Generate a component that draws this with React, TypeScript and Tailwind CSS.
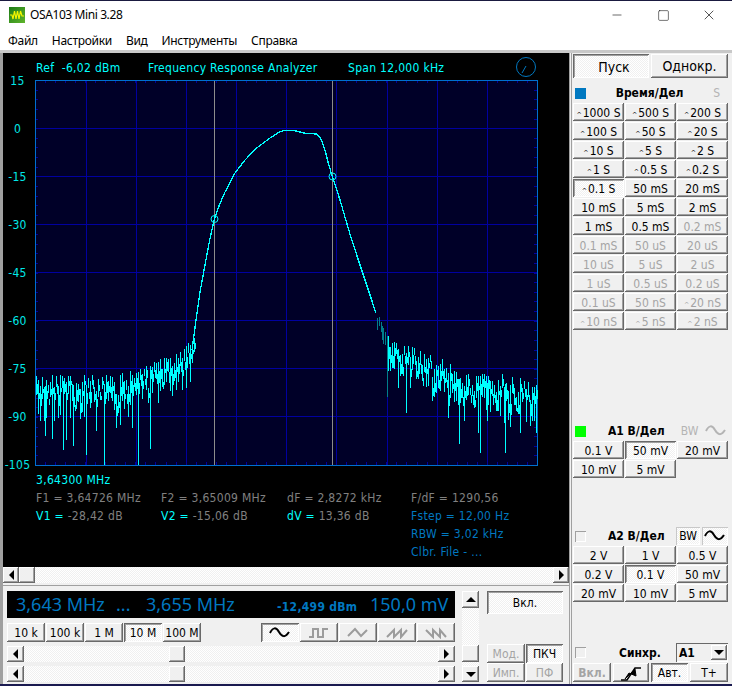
import React from "react"
import { Minus, Square, X } from "lucide-react"

const raised = "bg-[#f0f0f0] shadow-[inset_-1px_-1px_0_#696969,inset_1px_1px_0_#ffffff,inset_-2px_-2px_0_#a0a0a0]"
const sunken = "bg-[repeating-conic-gradient(#f0f0f0_0_25%,#ffffff_0_50%)] bg-[length:2px_2px] shadow-[inset_1px_1px_0_#696969,inset_-1px_-1px_0_#ffffff,inset_2px_2px_0_#a0a0a0]"
const softDown = "bg-[repeating-conic-gradient(#f0f0f0_0_25%,#ffffff_0_50%)] bg-[length:2px_2px] shadow-[inset_1px_1px_0_#c8c8c8,inset_-1px_-1px_0_#ffffff]"
const dither = "bg-[repeating-conic-gradient(#f0f0f0_0_25%,#ffffff_0_50%)] bg-[length:2px_2px]"

function Btn({ label, down, off, mark, className }: { label?: React.ReactNode; down?: boolean; off?: boolean; mark?: boolean; className?: string }) {
    return (
        <div className={`flex items-center justify-center whitespace-nowrap pt-px text-[12px] ${down ? sunken : raised} ${off ? "text-[#a4a4a4]" : "text-black"} ${className ?? ""}`}>
            {mark && <span className="mr-px translate-y-[3px] text-[7px]">^</span>}
            {label}
        </div>
    )
}

const timeButtons: [string, boolean, boolean][] = [
    ["1000 S", true, false], ["500 S", true, false], ["200 S", true, false],
    ["100 S", true, false], ["50 S", true, false], ["20 S", true, false],
    ["10 S", true, false], ["5 S", true, false], ["2 S", true, false],
    ["1 S", true, false], ["0.5 S", true, false], ["0.2 S", true, false],
    ["0.1 S", true, false], ["50 mS", false, false], ["20 mS", false, false],
    ["10 mS", false, false], ["5 mS", false, false], ["2 mS", false, false],
    ["1 mS", false, false], ["0.5 mS", false, false], ["0.2 mS", false, true],
    ["0.1 mS", false, true], ["50 uS", false, true], ["20 uS", false, true],
    ["10 uS", false, true], ["5 uS", false, true], ["2 uS", false, true],
    ["1 uS", false, true], ["0.5 uS", false, true], ["0.2 uS", false, true],
    ["0.1 uS", false, true], ["50 nS", false, true], ["20 nS", true, true],
    ["10 nS", true, true], ["5 nS", true, true], ["2 nS", true, true],
]

function rng(seed: number) {
    let s = seed
    return () => {
        s = (s * 16807) % 2147483647
        return s / 2147483647
    }
}

function lerp(table: number[][], x: number) {
    for (let i = 1; i < table.length; i++) {
        if (x <= table[i][0]) {
            const [x0, y0] = table[i - 1]
            const [x1, y1] = table[i]
            return y0 + ((y1 - y0) * (x - x0)) / (x1 - x0)
        }
    }
    return table[table.length - 1][1]
}

const leftTop = [[36, 376], [60, 375], [90, 375], [120, 373], [140, 368], [150, 362], [170, 356], [185, 346], [194, 336]]
const rightTop = [[388, 336], [400, 342], [420, 350], [440, 358], [460, 370], [480, 374], [500, 372], [520, 378], [537, 384]]

// side lobes: columns two pixels apart, so the plot shows through like in the capture
function noise(from: number, to: number, table: number[][], seed: number, depth: number, spikes: number[][]) {
    const r = rng(seed)
    let d = ""
    for (let x = from; x <= to; x += 2) {
        const top = lerp(table, x)
        const a = top + r() * r() * 26
        const b = a + 6 + r() * depth
        const c = a + 4 + r() * 10
        d += `M${x + 0.5} ${a.toFixed(0)}V${b.toFixed(0)}`
        d += `M${x + 1.5} ${c.toFixed(0)}V${(c + 4 + r() * 8).toFixed(0)}`
    }
    spikes.forEach(s => {
        d += `M${s[0] + 0.5} ${(lerp(table, s[0]) + 10).toFixed(0)}V${s[1]}`
    })
    return d
}

const leftNoise = noise(36, 194, leftTop, 7331, 36, [[63, 450], [73, 446], [86, 455], [104, 465], [138, 465], [150, 449], [45, 436], [52, 439], [66, 440], [132, 428], [120, 425]])
const rightNoise = noise(388, 537, rightTop, 1907, 30, [[406, 413], [398, 388], [448, 418], [459, 444], [480, 453], [478, 433], [505, 453], [487, 421], [520, 433], [536, 433], [510, 420]])
const mainCurve = "209.7,240 214.3,219 219,206 225,192 235,173 245,160 256.7,148 270,138 280,131.7 285,130.3 295,130.7 305,133.3 316.7,134 320.7,138.3 325,150 328.3,163.3 332.3,176.3 340,200 351.7,240 371.7,300 375.7,313"
const leftFall = "192,350 196,320 200,292 205,265 209.7,240"
const yLabels = ["15", "0", "-15", "-30", "-45", "-60", "-75", "-90", "-105"]
const vLines = [86, 136, 186, 236, 286, 336, 387, 437, 487]
const hLines = [128, 176, 224, 272, 320, 368, 416]

function Plot() {
    const ticksX = Array.from({ length: 50 }, (_, i) => 35 + i * 10.04)
    const ticksY = Array.from({ length: 40 }, (_, i) => 80 + i * 9.625)
    return (
        <svg width={503} height={386} viewBox="35 80 503 386" className="block shrink-0">
            <rect x="35" y="80" width="503" height="386" fill="#000028" />
            <g stroke="#0000a0" strokeWidth="1" shapeRendering="crispEdges">
                {vLines.map(x => <line key={x} x1={x + 0.5} x2={x + 0.5} y1="80" y2="466" />)}
                {hLines.map(y => <line key={y} x1="35" x2="538" y1={y + 0.5} y2={y + 0.5} />)}
                {ticksX.map(x => <line key={x} x1={Math.round(x) + 0.5} x2={Math.round(x) + 0.5} y1="81" y2="83" />)}
                {ticksX.map(x => <line key={x} x1={Math.round(x) + 0.5} x2={Math.round(x) + 0.5} y1="462" y2="465" />)}
                {ticksY.map(y => <line key={y} x1="36" x2="38" y1={Math.round(y) + 0.5} y2={Math.round(y) + 0.5} />)}
                {ticksY.map(y => <line key={y} x1="534" x2="537" y1={Math.round(y) + 0.5} y2={Math.round(y) + 0.5} />)}
            </g>
            <g stroke="#8c8c8c" shapeRendering="crispEdges">
                <line x1="214.5" x2="214.5" y1="80" y2="466" />
                <line x1="332.5" x2="332.5" y1="80" y2="466" />
            </g>
            <rect x="35.5" y="80.5" width="502" height="385" fill="none" stroke="#0070d0" shapeRendering="crispEdges" />
            <path d={leftNoise} fill="none" stroke="#00ffff" strokeWidth="1" shapeRendering="crispEdges" />
            <path d={rightNoise} fill="none" stroke="#00ffff" strokeWidth="1" shapeRendering="crispEdges" />
            <polyline points={leftFall} fill="none" stroke="#00ffff" strokeWidth="1.3" shapeRendering="crispEdges" />
            <polyline points={mainCurve} fill="none" stroke="#00ffff" strokeWidth="1.3" shapeRendering="crispEdges" />
            <path d="M377.5 318V330M379.5 317V326M381.5 322V332M382.5 326V340M383.5 328V344M385.5 332V345M387.5 336V397" stroke="#007f8c" fill="none" shapeRendering="crispEdges" />
            <circle cx="214.5" cy="219" r="3.5" fill="none" stroke="#00ffff" />
            <circle cx="332.5" cy="176.5" r="3.5" fill="none" stroke="#00ffff" />
        </svg>
    )
}

function Wave({ kind, color }: { kind: string; color: string }) {
    const paths: Record<string, string> = {
        sine: "M1 6 C4 0 7 0 10 5 S16 11 20 5",
        square: "M1 10H5V2H10V10H15V2H20",
        tri: "M1 9L8 2L14 9L20 3",
        saw: "M1 10L8 3V10L15 3V10L21 3",
        sawd: "M1 3L8 10V3L15 10V3L21 10",
    }
    return (
        <svg width={22} height={12} viewBox="0 0 22 12">
            <path d={paths[kind]} fill="none" stroke={color} strokeWidth="2" />
        </svg>
    )
}

function ScrollArrow({ dir }: { dir: "left" | "right" | "up" | "down" }) {
    const pts = { left: "5,0 5,10 0,5", right: "0,0 0,10 5,5", up: "0,5 10,5 5,0", down: "0,0 10,0 5,5" }[dir]
    const vertical = dir === "up" || dir === "down"
    return (
        <svg width={vertical ? 10 : 5} height={vertical ? 5 : 10} viewBox={vertical ? "0 0 10 5" : "0 0 5 10"}>
            <polygon points={pts} fill="#000" />
        </svg>
    )
}

function HScroll() {
    return (
        <div className={`flex h-[16px] w-[448px] ${dither}`}>
            <div className={`flex h-full w-[17px] items-center justify-center ${raised}`}><ScrollArrow dir="left" /></div>
            <div className={`ml-[145px] h-full w-[16px] ${raised}`} />
            <div className={`ml-auto flex h-full w-[17px] items-center justify-center ${raised}`}><ScrollArrow dir="right" /></div>
        </div>
    )
}

function Check({ className }: { className: string }) {
    return <div className={`h-[11px] w-[11px] shrink-0 ${className}`} />
}

function Logo() {
    return (
        <svg width={16} height={16} viewBox="0 0 16 16" className="shrink-0">
            <defs>
                <linearGradient id="lg" x1="0" y1="0" x2="1" y2="1">
                    <stop offset="0" stopColor="#1c7a16" />
                    <stop offset="1" stopColor="#5fb52c" />
                </linearGradient>
            </defs>
            <rect width="16" height="16" fill="url(#lg)" />
            <path d="M1 8H3L4 12L5.5 4L7 12L8.5 4L10 12L11.5 4L13 9H15" fill="none" stroke="#f5f500" strokeWidth="1.2" />
        </svg>
    )
}

function TriggerIcon() {
    return (
        <svg width={22} height={15} viewBox="0 0 22 15">
            <path d="M1 14H7L15 2H21" fill="none" stroke="#000" strokeWidth="1.5" />
            <path d="M5 13L15 3L16 10L9 7Z" fill="#000" stroke="#000" />
        </svg>
    )
}

export default function App() {
    return (
        <div className="flex h-[686px] w-[732px] flex-col overflow-hidden bg-[#f0f0f0] font-['DejaVu_Sans_Condensed','DejaVu_Sans',sans-serif] text-[12px]">
            <div className="h-px shrink-0 bg-[#1a1a40]" />

            <div className="flex h-[28px] shrink-0 items-center bg-white pl-[9px] font-['Noto_Sans',sans-serif] text-[12px] tracking-[-0.4px] text-black">
                <Logo />
                <span className="ml-[5px]">OSA103 Mini 3.28</span>
                <div className="ml-auto flex h-full items-center">
                    <div className="flex w-[46px] justify-center"><Minus size={14} strokeWidth={1} /></div>
                    <div className="flex w-[46px] justify-center"><Square size={13} strokeWidth={1} /></div>
                    <div className="flex w-[46px] justify-center"><X size={16} strokeWidth={1} /></div>
                </div>
            </div>

            <div className="flex h-[21px] shrink-0 items-center gap-[14px] bg-white pl-[8px] pt-[3px] font-['Noto_Sans',sans-serif] text-[12px] tracking-[-0.3px] text-black">
                <span>Файл</span>
                <span>Настройки</span>
                <span>Вид</span>
                <span>Инструменты</span>
                <span>Справка</span>
            </div>

            <div className="flex min-h-0 flex-1 border-t-[3px] border-[#c8c8c8]">
                <div className="flex w-[570px] shrink-0 flex-col border-l-[3px] border-r border-[#a0a0a0]">
                    <div className="flex h-[514px] shrink-0 flex-col bg-black tracking-[0.3px]">
                        <div className="flex h-[27px] shrink-0 items-center pl-[33px] pt-[2px] text-[#00ffff]">
                            <span className="w-[112px] whitespace-pre">Ref  -6,02 dBm</span>
                            <span className="w-[200px]">Frequency Response Analyzer</span>
                            <span>Span 12,000 kHz</span>
                            <svg width={22} height={22} viewBox="0 0 22 22" className="ml-auto mr-[32px] -translate-y-px">
                                <circle cx="11" cy="11" r="9.5" fill="none" stroke="#0078c0" />
                                <line x1="7" y1="17" x2="11" y2="10" stroke="#0078c0" />
                            </svg>
                        </div>
                        <div className="flex h-[386px] shrink-0">
                            <div className="-mt-[23px] mr-[3px] flex w-[29px] shrink-0 flex-col text-[#00e8e8]">
                                {yLabels.map(l => (
                                    <div key={l} className="flex h-[48px] shrink-0 items-center justify-center">{l}</div>
                                ))}
                            </div>
                            <Plot />
                        </div>
                        <div className="mt-[5px] grid grid-cols-[125px_126px_124px_150px] items-center pl-[33px] text-[#808080] [grid-auto-rows:18px]">
                            <span className="col-span-4 text-[#00ffff]">3,64300 MHz</span>
                            <span>F1 = 3,64726 MHz</span>
                            <span>F2 = 3,65009 MHz</span>
                            <span>dF = 2,8272 kHz</span>
                            <span>F/dF = 1290,56</span>
                            <span><span className="text-[#00ffff]">V1 = </span>-28,42 dB</span>
                            <span><span className="text-[#00ffff]">V2 = </span>-15,06 dB</span>
                            <span><span className="text-[#00ffff]">dV = </span>13,36 dB</span>
                            <span className="text-[#0078c0]">Fstep = 12,00 Hz</span>
                            <span className="col-start-4 text-[#0078c0]">RBW = 3,02 kHz</span>
                            <span className="col-start-4 text-[#0078c0]">Clbr. File - ...</span>
                        </div>
                    </div>

                    <div className={`flex h-[16px] shrink-0 ${dither}`}>
                        <div className={`flex h-full w-[16px] items-center justify-center ${raised}`}><ScrollArrow dir="left" /></div>
                        <div className={`h-full w-[16px] ${raised}`} />
                        <div className={`ml-auto flex h-full w-[16px] items-center justify-center ${raised}`}><ScrollArrow dir="right" /></div>
                    </div>

                    <div className="mt-[2px] flex flex-1 border-t border-[#a0a0a0] pl-[4px] pt-[5px]">
                        <div className="flex w-[448px] flex-col">
                            <div className="flex h-[27px] shrink-0 items-center bg-black pl-[9px] text-[#0078c0]">
                                <span className="w-[100px] font-['Noto_Sans',sans-serif] text-[18px]">3,643 MHz</span>
                                <span className="w-[30px] font-['Noto_Sans',sans-serif] text-[18px]">...</span>
                                <span className="w-[131px] font-['Noto_Sans',sans-serif] text-[18px]">3,655 MHz</span>
                                <span className="w-[93px] translate-y-[2px] font-bold tracking-[0.3px]">-12,499 dBm</span>
                                <span className="font-['Noto_Sans',sans-serif] text-[18px]">150,0 mV</span>
                            </div>
                            <div className="mt-[5px] flex h-[19px] shrink-0">
                                <Btn label="10 k" className="mr-px w-[38px]" />
                                <Btn label="100 k" className="mr-px w-[38px]" />
                                <Btn label="1 M" className="mr-px w-[38px]" />
                                <Btn label="10 M" down className="mr-px w-[38px]" />
                                <Btn label="100 M" className="w-[38px]" />
                                <Btn down label={<Wave kind="sine" color="#000" />} className="ml-[60px] w-[38px]" />
                                <Btn label={<Wave kind="square" color="#9c9c9c" />} className="ml-px w-[38px]" />
                                <Btn label={<Wave kind="tri" color="#9c9c9c" />} className="ml-px w-[38px]" />
                                <Btn label={<Wave kind="saw" color="#9c9c9c" />} className="ml-px w-[38px]" />
                                <Btn label={<Wave kind="sawd" color="#9c9c9c" />} className="ml-px w-[38px]" />
                            </div>
                            <div className="mt-[4px]"><HScroll /></div>
                            <div className="mt-[4px]"><HScroll /></div>
                        </div>

                        <div className={`ml-[7px] flex h-[91px] w-[17px] shrink-0 flex-col ${dither}`}>
                            <div className={`flex h-[17px] w-full items-center justify-center ${raised}`}><ScrollArrow dir="up" /></div>
                            <div className={`mt-[37px] h-[17px] w-full ${raised}`} />
                            <div className={`mt-auto flex h-[16px] w-full items-center justify-center ${raised}`}><ScrollArrow dir="down" /></div>
                        </div>

                        <div className="ml-[8px] flex w-[76px] shrink-0 flex-col">
                            <Btn label="Вкл." down className="h-[23px] w-[76px]" />
                            <div className="mt-[30px] flex h-[19px]">
                                <Btn label="Мод." off className="w-[38px]" />
                                <Btn label="ПКЧ" down className="ml-[1px] w-[37px]" />
                            </div>
                            <div className="flex h-[19px]">
                                <Btn label="Имп." off className="w-[38px]" />
                                <Btn label="ПФ" off className="ml-[1px] w-[37px]" />
                            </div>
                        </div>
                    </div>
                </div>

                <div className="ml-px flex flex-1 flex-col border-l-[1px] border-[#a0a0a0] pl-[1px] pt-[1px]">
                    <div className="flex h-[24px] shrink-0 gap-[2px]">
                        <Btn label={<span className="pl-[6px] pt-px text-[14px]">Пуск</span>} down className="w-[76px]" />
                        <Btn label={<span className="text-[14px]">Однокр.</span>} className="w-[77px]" />
                    </div>
                    <div className="mt-[7px] flex h-[16px] shrink-0 items-center pl-[2px] pr-[12px]">
                        <Check className="bg-[#0078c0]" />
                        <span className="flex-1 text-center font-bold">Время/Дел</span>
                        <span className="text-[#b4b4b4]">S</span>
                    </div>
                    <div className="mt-[2px] grid w-[155px] shrink-0 grid-cols-[51px_51px_51px] gap-px [grid-auto-rows:18px]">
                        {timeButtons.map(([label, mark, off]) => (
                            <Btn key={label} label={label} mark={mark} off={off} down={label === "0.1 S"} />
                        ))}
                    </div>

                    <div className="mt-[93px] flex h-[16px] shrink-0 items-center pl-[2px]">
                        <Check className="bg-[#00ff00]" />
                        <span className="ml-[22px] font-bold">A1 В/Дел</span>
                        <span className="ml-[16px] text-[#b4b4b4]">BW</span>
                        <span className="ml-[7px]"><Wave kind="sine" color="#b4b4b4" /></span>
                    </div>
                    <div className="mt-[2px] grid w-[155px] shrink-0 grid-cols-[51px_51px_51px] gap-px [grid-auto-rows:18px]">
                        <Btn label="0.1 V" />
                        <Btn label="50 mV" down />
                        <Btn label="20 mV" />
                        <Btn label="10 mV" />
                        <Btn label="5 mV" />
                    </div>

                    <div className="mt-[49px] flex h-[18px] shrink-0 items-center pl-[2px]">
                        <Check className="bg-[#f0f0f0] shadow-[inset_1px_1px_0_#a0a0a0,inset_-1px_-1px_0_#ffffff]" />
                        <span className="ml-[22px] w-[56px] whitespace-nowrap font-bold">A2 В/Дел</span>
                        <div className={`ml-[12px] flex h-full w-[24px] items-center justify-center ${softDown}`}>BW</div>
                        <div className={`ml-[2px] flex h-full w-[26px] items-center justify-center ${softDown}`}><Wave kind="sine" color="#000" /></div>
                    </div>
                    <div className="mt-px grid w-[155px] shrink-0 grid-cols-[51px_51px_51px] gap-px [grid-auto-rows:18px]">
                        <Btn label="2 V" />
                        <Btn label="1 V" />
                        <Btn label="0.5 V" />
                        <Btn label="0.2 V" />
                        <Btn label="0.1 V" down />
                        <Btn label="50 mV" />
                        <Btn label="20 mV" />
                        <Btn label="10 mV" />
                        <Btn label="5 mV" />
                    </div>

                    <div className="mt-[41px] flex h-[19px] shrink-0 items-center pl-[2px]">
                        <Check className="bg-[#f0f0f0] shadow-[inset_1px_1px_0_#a0a0a0,inset_-1px_-1px_0_#ffffff]" />
                        <span className="ml-[33px] w-[57px] font-bold">Синхр.</span>
                        <div className="flex h-full w-[52px] items-center justify-between bg-[#f0f0f0] pl-[3px] pr-px font-bold shadow-[inset_1px_1px_0_#696969,inset_-1px_-1px_0_#ffffff]">
                            A1
                            <div className={`flex h-[15px] w-[16px] items-center justify-center ${raised}`}>
                                <ScrollArrow dir="down" />
                            </div>
                        </div>
                    </div>
                    <div className="mt-px flex h-[19px] shrink-0">
                        <Btn label="Вкл." off className="w-[38px] text-[11px] font-bold" />
                        <Btn label={<TriggerIcon />} className="ml-[2px] w-[36px]" />
                        <Btn label="Авт." down className="ml-[2px] w-[37px]" />
                        <Btn label="T+" className="ml-[2px] w-[38px]" />
                    </div>
                </div>
            </div>

            <div className="h-[2px] shrink-0 bg-[#1a1a50]" />
        </div>
    )
}
